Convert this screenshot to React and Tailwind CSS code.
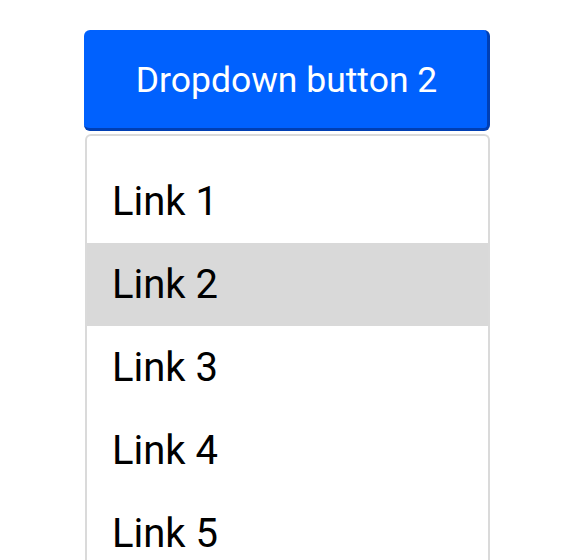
export default function App() {
  const links = ["Link 1", "Link 2", "Link 3", "Link 4", "Link 5"];
  return (
    <div className="w-[578px] h-[560px] overflow-hidden bg-white" style={{ fontFamily: "Roboto, 'Liberation Sans', sans-serif" }}>
      <div className="ml-[84px] mt-[30px] w-[406px] flex flex-col">
        <button className="h-[101px] w-full flex items-center justify-center pt-[3px] pl-[2px] rounded-[6px] bg-[#0061fe] border-r-[3px] border-b-[3px] border-[#003fb4] text-white text-[35.5px] leading-none">
          Dropdown button 2
        </button>
        <div className="mt-[3px] ml-px border-2 border-b-0 border-[#dadada] rounded-t-[6px] pt-[24px] bg-white">
          {links.map((l, i) => (
            <div
              key={l}
              className={
                i === 1
                  ? "h-[83px] flex items-center pl-[25px] text-[40px] leading-none text-black bg-[#d9d9d9]"
                  : "h-[83px] flex items-center pl-[25px] text-[40px] leading-none text-black"
              }
            >
              {l}
            </div>
          ))}
        </div>
      </div>
    </div>
  );
}
